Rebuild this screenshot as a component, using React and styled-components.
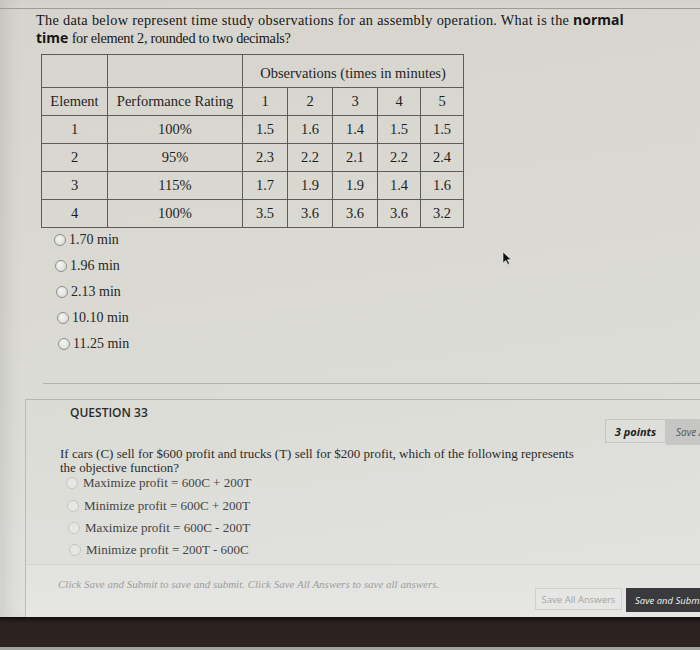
import React from "react";
import styled, { createGlobalStyle } from "styled-components";

const GlobalStyle = createGlobalStyle`
  html, body { margin: 0; padding: 0; }
  body { width: 700px; height: 650px; overflow: hidden; background: #2a2220; }
`;

const Page = styled.div`
  position: relative;
  width: 700px;
  height: 650px;
  overflow: hidden;
  display: flex;
  flex-direction: column;
  background: #2a2220;
`;

const Screen = styled.div`
  height: 617px;
  display: flex;
  flex-direction: column;
  background: linear-gradient(172deg, #d6d4cd 0%, #d9d8d1 35%, #dcdcd6 60%, #e0e1dd 85%, #e4e5e2 100%);
  font-family: "Liberation Serif", "Times New Roman", serif;
  color: #1d1d1d;
  box-shadow: inset 14px 0 16px -8px rgba(0, 0, 0, 0.09);
`;

const QuestionOne = styled.section`
  margin-top: 8px;
  border-top: 1px solid #9d9d98;
  padding: 2px 0 0 36px;
`;

const Prompt = styled.p`
  margin: 0;
  font-size: 14.3px;
  line-height: 17px;
  color: #161616;
`;

const Line = styled.span`
  letter-spacing: ${({ $ls }) => $ls}px;
`;

const Strong = styled.b`
  font-family: "Open Sans", "Liberation Sans", sans-serif;
  font-weight: 700;
  font-size: 14px;
  letter-spacing: 0;
`;

const Table = styled.table`
  margin: 7px 0 0 5px;
  border-collapse: collapse;
  table-layout: fixed;
  width: 422px;
  font-size: 14.5px;
  color: #1f1f1f;
`;

const Cell = styled.td`
  border: 1px solid #5c5c5a;
  height: ${({ $h }) => $h}px;
  padding: ${({ $top }) => ($top ? "4px 0 0" : "0")};
  text-align: center;
  vertical-align: middle;
`;

const Options = styled.div`
  margin-top: -1px;
  display: flex;
  flex-direction: column;
`;

const Option = styled.label`
  height: 26px;
  display: flex;
  align-items: center;
  gap: 3px;
  padding-left: ${({ $shift }) => 18 + $shift}px;
  font-size: 14px;
  color: #262626;
`;

const Radio = styled.span`
  width: 10px;
  height: 10px;
  border-radius: 50%;
  border: 1px solid ${({ $light }) => ($light ? "#c4c5c1" : "#8e8e8b")};
  background: ${({ $light }) => ($light ? "#e6e7e4" : "radial-gradient(circle at 40% 35%, #f4f4f2, #d6d6d2)")};
  flex-shrink: 0;
`;

const Divider = styled.div`
  margin: 26px 0 0 43px;
  border-top: 1px solid #b3b3ad;
`;

const QuestionTwo = styled.section`
  flex: 1;
  margin: 15px 0 0 25px;
  border-top: 1px solid #b7b7b2;
  border-left: 1px solid #bdbdb8;
  display: flex;
  flex-direction: column;
`;

const Header = styled.div`
  height: 44px;
  display: flex;
  justify-content: space-between;
  align-items: flex-start;
`;

const Title = styled.h3`
  margin: 6px 0 0 44px;
  font-family: "Open Sans", "Liberation Sans", sans-serif;
  font-weight: 600;
  font-size: 12px;
  line-height: 14px;
  color: #2a2a2a;
`;

const Tools = styled.div`
  margin: 19px -26px 0 0;
  display: flex;
`;

const Points = styled.div`
  width: 61px;
  height: 24px;
  box-sizing: border-box;
  border: 1px solid #c6c6c1;
  display: flex;
  align-items: center;
  justify-content: center;
  font-family: "Open Sans", "Liberation Sans", sans-serif;
  font-weight: 700;
  font-style: italic;
  font-size: 11px;
  color: #222;
`;

const SaveOne = styled.div`
  width: 60px;
  height: 26px;
  background: #c6c7c4;
  display: flex;
  align-items: center;
  padding-left: 10px;
  box-sizing: border-box;
  font-family: "Open Sans", "Liberation Sans", sans-serif;
  font-style: italic;
  font-size: 10px;
  color: #555;
  white-space: nowrap;
  overflow: hidden;
`;

const Body = styled.p`
  margin: 3px 0 0 34px;
  width: 528px;
  font-size: 13px;
  line-height: 14px;
  color: #2b2b2b;
`;

const ChoiceList = styled.div`
  margin-top: -3px;
  display: flex;
  flex-direction: column;
`;

const Choice = styled.label`
  height: 22.4px;
  display: flex;
  align-items: center;
  gap: 5px;
  padding-left: ${({ $shift }) => 40 + $shift}px;
  font-size: 13px;
  color: #444;
`;

const Footer = styled.footer`
  margin-top: auto;
  height: 52px;
  border-top: 1px solid #d3d4d0;
  background: linear-gradient(180deg, #e2e3e0, #e6e7e5);
  display: flex;
  justify-content: space-between;
  align-items: flex-start;
`;

const Note = styled.p`
  margin: 12px 0 0 32px;
  font-size: 11px;
  line-height: 14px;
  font-style: italic;
  color: #9b9c9a;
`;

const Actions = styled.div`
  margin: 23px -24px 0 0;
  display: flex;
  gap: 4px;
`;

const Button = styled.button`
  height: ${({ $dark }) => ($dark ? 24 : 22)}px;
  width: ${({ $dark }) => ($dark ? 98 : 87)}px;
  border: 1px solid ${({ $dark }) => ($dark ? "#3a3a3c" : "#d0d1ce")};
  background: ${({ $dark }) => ($dark ? "#3a3a3c" : "#e6e7e5")};
  color: ${({ $dark }) => ($dark ? "#f2f2f2" : "#a3a4a2")};
  font-family: "Open Sans", "Liberation Sans", sans-serif;
  font-size: 9.5px;
  font-style: ${({ $dark }) => ($dark ? "italic" : "normal")};
  padding: 0 0 0 ${({ $dark }) => ($dark ? 8 : 0)}px;
  text-align: ${({ $dark }) => ($dark ? "left" : "center")};
  white-space: nowrap;
  overflow: hidden;
`;

const Bezel = styled.div`
  flex: 1;
  display: flex;
  flex-direction: column;
  justify-content: flex-end;
  background: linear-gradient(180deg, #141010 0px, #2b2220 6px, #2d2422 100%);
`;

const Desk = styled.div`
  height: 3px;
  background: #a3a3a1;
`;

const Cursor = styled.svg`
  position: absolute;
  left: 502px;
  top: 251px;
  width: 10px;
  height: 14px;
`;

const obs = [
  ["1", "100%", ["1.5", "1.6", "1.4", "1.5", "1.5"]],
  ["2", "95%", ["2.3", "2.2", "2.1", "2.2", "2.4"]],
  ["3", "115%", ["1.7", "1.9", "1.9", "1.4", "1.6"]],
  ["4", "100%", ["3.5", "3.6", "3.6", "3.6", "3.2"]],
];

const answers = ["1.70 min", "1.96 min", "2.13 min", "10.10 min", "11.25 min"];

const choices = [
  "Maximize profit = 600C + 200T",
  "Minimize profit = 600C + 200T",
  "Maximize profit = 600C - 200T",
  "Minimize profit = 200T - 600C",
];

export default function App() {
  return (
    <Page>
      <GlobalStyle />
      <Screen>
        <QuestionOne>
          <Prompt>
            <Line $ls={0.3}>
              The data below represent time study observations for an assembly operation. What is the{" "}
            </Line>
            <Strong>normal</Strong>
            <br />
            <Line $ls={-0.3}>
              <Strong>time</Strong> for element 2, rounded to two decimals?
            </Line>
          </Prompt>
          <Table>
            <colgroup>
              <col style={{ width: 66 }} />
              <col style={{ width: 135 }} />
              <col style={{ width: 45 }} />
              <col style={{ width: 45 }} />
              <col style={{ width: 45 }} />
              <col style={{ width: 43 }} />
              <col style={{ width: 43 }} />
            </colgroup>
            <tbody>
              <tr>
                <Cell $h={28} $top />
                <Cell $h={28} $top />
                <Cell $h={28} $top colSpan={5}>Observations (times in minutes)</Cell>
              </tr>
              <tr>
                <Cell $h={27}>Element</Cell>
                <Cell $h={27}>Performance Rating</Cell>
                {[1, 2, 3, 4, 5].map((n) => (
                  <Cell $h={27} key={n}>{n}</Cell>
                ))}
              </tr>
              {obs.map(([el, rate, vals]) => (
                <tr key={el}>
                  <Cell $h={27}>{el}</Cell>
                  <Cell $h={27}>{rate}</Cell>
                  {vals.map((v, i) => (
                    <Cell $h={27} key={i}>{v}</Cell>
                  ))}
                </tr>
              ))}
            </tbody>
          </Table>
          <Options>
            {answers.map((a, i) => (
              <Option key={a} $shift={i}>
                <Radio />
                {a}
              </Option>
            ))}
          </Options>
        </QuestionOne>

        <Divider />

        <QuestionTwo>
          <Header>
            <Title>QUESTION 33</Title>
            <Tools>
              <Points>3 points</Points>
              <SaveOne>Save Answer</SaveOne>
            </Tools>
          </Header>
          <Body>
            If cars (C) sell for $600 profit and trucks (T) sell for $200 profit, which of the following represents
            the objective function?
          </Body>
          <ChoiceList>
            {choices.map((c, i) => (
              <Choice key={c} $shift={i}>
                <Radio $light />
                {c}
              </Choice>
            ))}
          </ChoiceList>
          <Footer>
            <Note>
              Click Save and Submit to save and submit. Click Save All Answers to save all answers.
            </Note>
            <Actions>
              <Button>Save All Answers</Button>
              <Button $dark>Save and Submit</Button>
            </Actions>
          </Footer>
        </QuestionTwo>
      </Screen>
      <Bezel>
        <Desk />
      </Bezel>
      <Cursor viewBox="0 0 10 14">
        <path d="M1 1 L1 12 L3.8 9.4 L5.8 13.4 L7.4 12.6 L5.4 8.7 L9 8.6 Z" fill="#111" stroke="#eee" strokeWidth="0.6" />
      </Cursor>
    </Page>
  );
}
